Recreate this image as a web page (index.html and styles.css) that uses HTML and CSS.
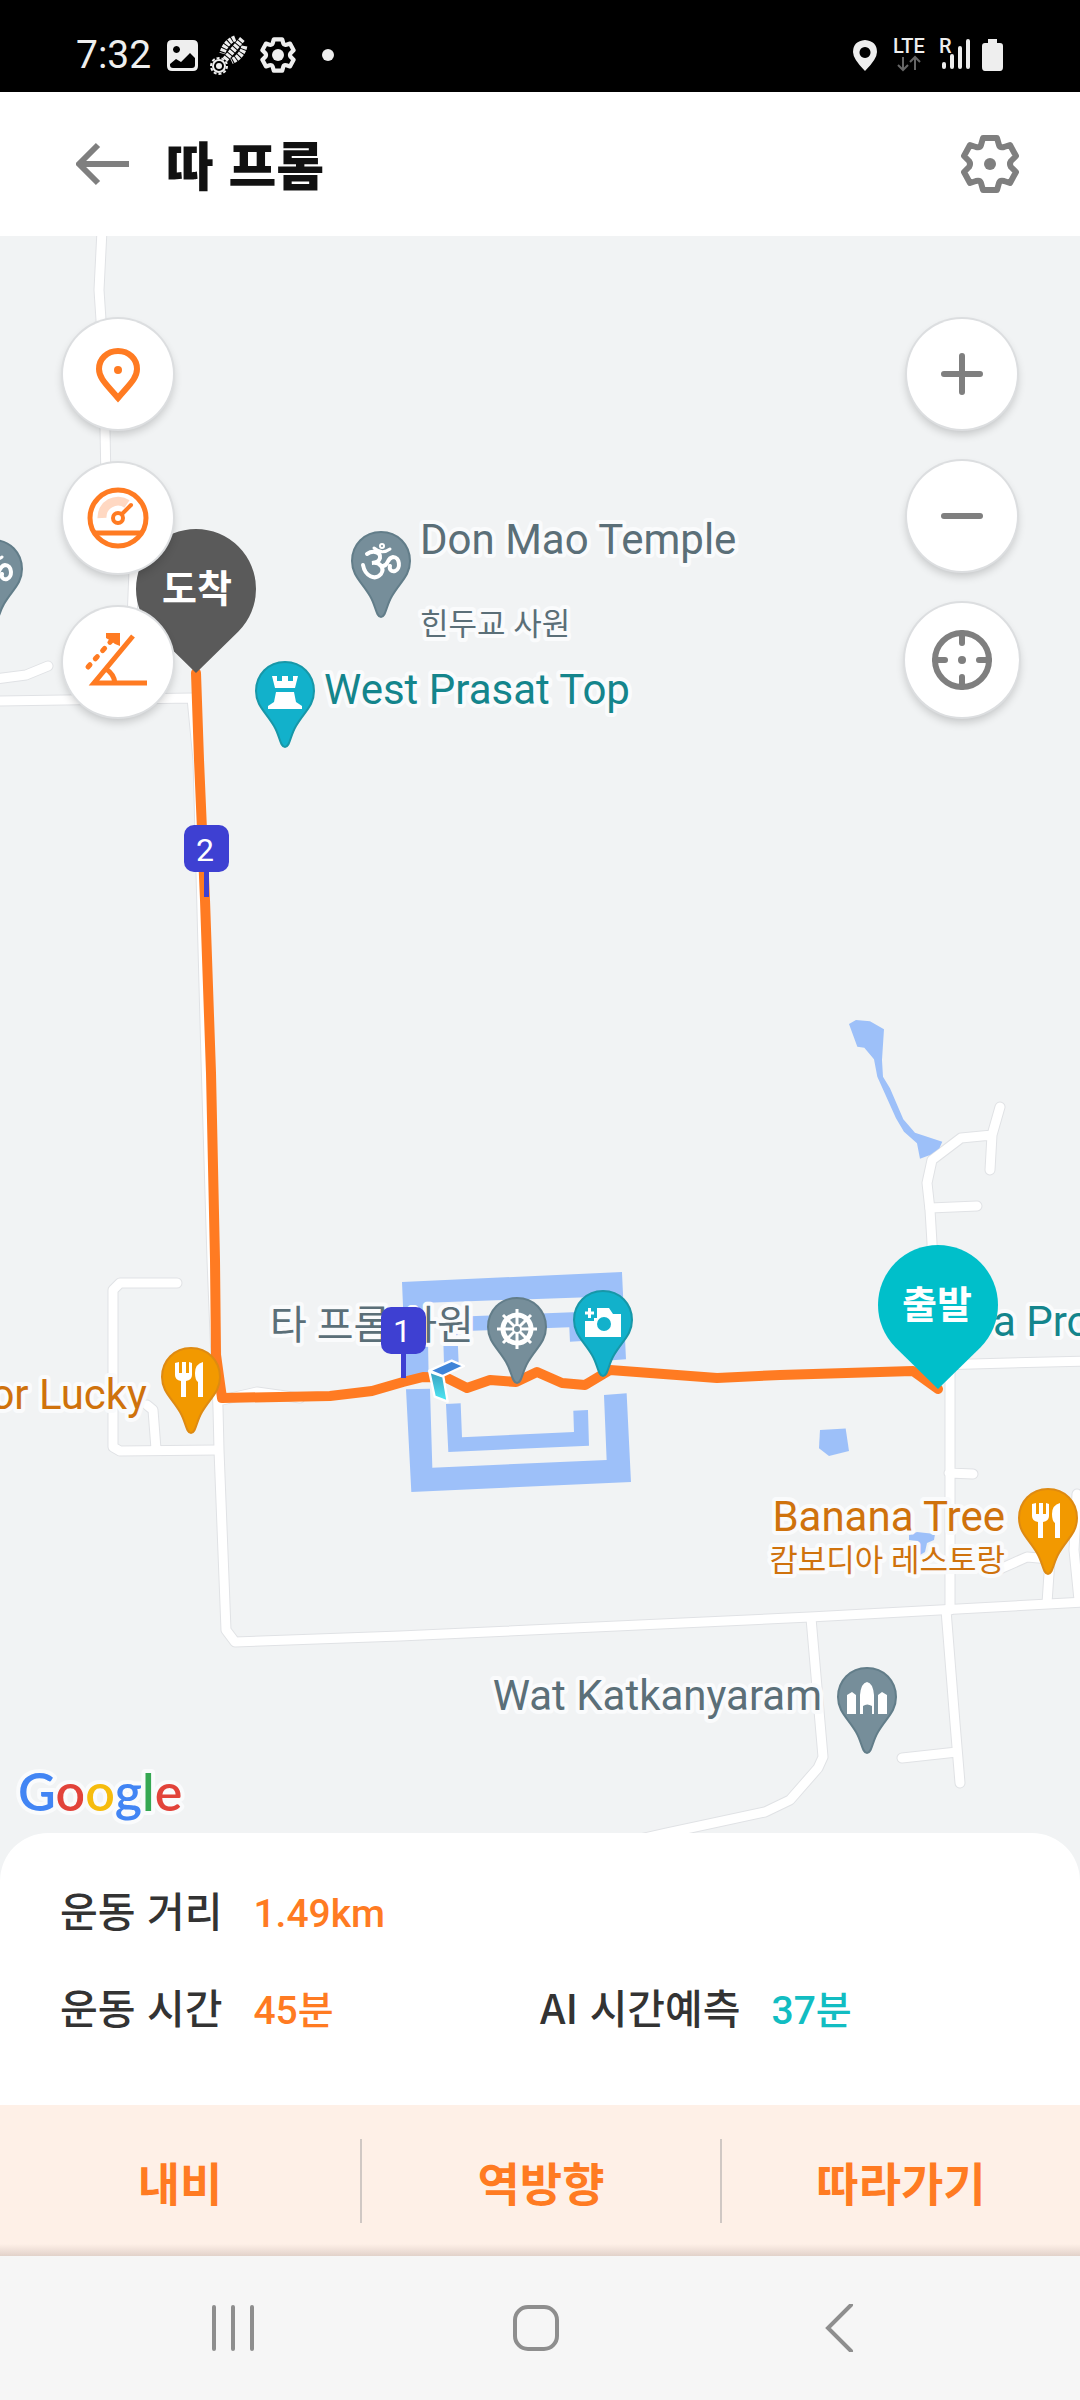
FILE: index.html
```html
<!DOCTYPE html>
<html lang="ko">
	<head>
		<meta charset="utf-8" />
		<meta name="viewport" content="width=device-width, initial-scale=1" />
		<title>따 프롬</title>
		<link rel="stylesheet" href="styles.css">
	</head>
	<body>
		<svg class="defs" aria-hidden="true">
			<defs>
				<symbol id="gear" viewBox="-30 -30 60 60">
					<path d="M-7 -26H7L9 -19Q10 -16 14 -17L20 -19L26 -8L21 -3Q19 0 21 3L26 8L20 19L14 17Q10 16 9 19L7 26H-7L-9 19Q-10 16 -14 17L-20 19L-26 8L-21 3Q-19 0 -21 -3L-26 -8L-20 -19L-14 -17Q-10 -16 -9 -19Z" fill="none" stroke="currentColor" stroke-linejoin="round"/>
				</symbol>
			</defs>
		</svg>

		<!-- status bar -->
		<div class="status">
			<div class="status-side">
				<span class="clock">7:32</span>
				<svg width="31" height="31" viewBox="0 0 31 31"><path fill="#eee" fill-rule="evenodd" d="M5 0H26Q31 0 31 5V26Q31 31 26 31H5Q0 31 0 26V5Q0 0 5 0ZM3 24L9 19L14 22L23 13L28 18V25Q28 28 25 28H6Q3 28 3 25ZM9.500 6A3.500 3.500 0 1 0 9.510 6Z"/></svg>
				<svg width="38" height="38" viewBox="0 0 38 38">
					<g transform="rotate(40 24 13)" fill="none" stroke="#eee">
						<path d="M18 4Q13 13 18 24" stroke-width="6" stroke-dasharray="3 1"/>
						<path d="M30 4Q35 13 30 24" stroke-width="6" stroke-dasharray="3 1"/>
						<path d="M24 0V27" stroke-width="6" stroke-dasharray="3 1"/>
					</g>
					<circle cx="9" cy="30" r="6" fill="none" stroke="#eee" stroke-width="2"/>
					<circle cx="9" cy="30" r="8" fill="none" stroke="#eee" stroke-width="2" stroke-dasharray="3 2"/>
					<circle cx="9" cy="30" r="3" fill="#eee"/>
				</svg>
				<svg class="status-gear" width="36" height="36" viewBox="0 0 36 36"><use href="#gear" width="36" height="36"/><circle cx="18" cy="18" r="6" fill="#eee"/></svg>
				<span class="dot"></span>
			</div>
			<div class="status-side">
				<svg class="gps" width="24" height="31" viewBox="0 0 24 31"><path fill="#eee" fill-rule="evenodd" d="M12 0Q24 1 24 12Q24 19 12 31Q0 19 0 12Q0 1 12 0ZM12 7A5.500 5.500 0 1 0 12.010 7Z"/></svg>
				<svg width="34" height="34" viewBox="0 0 34 34">
					<text class="net" x="0" y="15">LTE</text>
					<path d="M10 19V32M5 27L10 32L15 27M22 32V19M17 24L22 19L27 24" fill="none" stroke="#666" stroke-width="2"/>
				</svg>
				<svg width="31" height="34" viewBox="0 0 31 34">
					<text class="net" x="0" y="15">R</text>
					<path d="M5 26V29M13 18V29M21 10V29M29 3V29" stroke="#eee" stroke-width="4" stroke-linecap="round"/>
				</svg>
				<svg width="21" height="32" viewBox="0 0 21 32"><path fill="#eee" d="M6 0H15V4H18Q21 4 21 7V28Q21 32 18 32H3Q0 32 0 28V7Q0 4 3 4H6Z"/></svg>
			</div>
		</div>

		<header class="header">
			<button class="icon-btn" aria-label="뒤로">
				<svg width="54" height="46" viewBox="0 0 54 46"><path d="M53 23H5M22 4L3 23L22 42" fill="none" stroke="#7f7f7f" stroke-width="6" stroke-linejoin="round"/></svg>
			</button>
			<h1>따 프롬</h1>
			<button class="icon-btn settings" aria-label="설정">
				<svg width="60" height="60" viewBox="0 0 60 60"><use href="#gear" width="60" height="60"/><circle cx="30" cy="30" r="6" fill="#7f7f7f"/></svg>
			</button>
		</header>

		<main class="map">
			<svg class="canvas" viewBox="0 236 1080 1645" preserveAspectRatio="xMidYMin slice">
				<defs>
					<path id="pin" d="M0 1C17 1 29 14 29 30C29 45 19 51 11 65C5 75 5 86 0 86C-5 86 -5 75 -11 65C-19 51 -29 45 -29 30C-29 14 -17 1 0 1Z" stroke-width="2"/>
					<g id="om" fill="none" stroke="#fff" stroke-width="4" stroke-linecap="round">
						<path d="M-14 23C-8 19 0 21 -1 27C-2 31 -6 32 -9 32C-1 31 4 37 0 43C-6 50 -16 45 -18 34"/>
						<path d="M1 35C8 36 5 27 12 26C19 26 20 38 14 40C10 41 8 38 9 35"/>
						<path d="M-7 17Q1 24 9 18" stroke-width="3"/>
						<circle cx="1" cy="15" r="1"/>
					</g>
					<g id="food" fill="#fff">
						<path d="M-16 16V28Q-16 33 -10 34V50H-5V34Q1 33 1 28V16L-2 15V26H-5V15H-9V26H-12V15Z"/>
						<path d="M12 15Q4 17 4 26Q4 33 7 35V50H12Z"/>
					</g>
					<g id="roads" fill="none" stroke-linecap="round" stroke-linejoin="round">
						<path d="M102 230L99 290L101 320L105 430L106 480L134 570L132 620V698"/>
						<path d="M-5 679L26 675L48 666M-5 701L192 698L198 760L206 1060L212 1260L218 1408L219 1450L226 1630L235 1642L400 1636L810 1617L1085 1602"/>
						<path d="M177 1283H120L113 1290V1447L120 1451L217 1450M147 1405L153 1410L156 1449"/>
						<path d="M222 1400L257 1392L300 1398"/>
						<path d="M1000 1107L992 1135L990 1170M992 1135L961 1138L932 1160L927 1183L930 1210L932 1243L935 1365L1085 1361"/>
						<path d="M930 1208L977 1206M950 1365V1610M949 1473L973 1474"/>
						<path d="M946 1610L955 1723L960 1783M957 1752L902 1758"/>
						<path d="M811 1618L823 1757L818 1768L790 1800L765 1812L667 1833L600 1848"/>
						<path d="M1047 1603L1050 1559L1027 1557L1000 1569M1079 1600L1074 1550L1077 1494"/>
					</g>
					<linearGradient id="cyan" x1="0" y1="0" x2="0" y2="1"><stop offset="0" stop-color="#3a9fc0"/><stop offset="1" stop-color="#4deaf5"/></linearGradient>
				</defs>

				<use href="#roads" stroke="#e0e2e5" stroke-width="11"/>
				<use href="#roads" stroke="#fff" stroke-width="9"/>

				<!-- water -->
				<g class="water" transform="translate(380 1240) scale(.3333)">
					<path d="M66 126L726 96L738 358L674 362L665 170L142 188L146 412L78 415Z"/>
					<path d="M78 448L150 446L157 683L680 660L672 465L740 460L753 726L94 756Z"/>
					<path d="M188 232L615 215L620 302L570 305L568 262L232 274L236 370L192 372Z"/>
					<path d="M198 492L242 490L246 592L582 576L580 512L624 510L627 617L205 636Z"/>
				</g>
				<g class="water" transform="translate(780 980) scale(.3333)">
					<path d="M207 132L228 120L270 124L312 148L306 240L309 290L330 325L370 418L405 458L487 485L478 505L450 525L420 536L411 490L372 455L348 415L292 290L282 238L253 203L232 200Z"/>
					<path d="M120 1350L197 1346L207 1413L147 1428L117 1405Z"/>
				</g>
				<path class="water" d="M909 1535L917 1532L935 1534L934 1540L927 1543L925 1552L920 1555L917 1553L918 1541L909 1540Z"/>

				<!-- place names -->
				<g class="places">
					<text class="grey" x="420" y="554">Don Mao Temple</text>
					<text class="grey small" x="420" y="635">힌두교 사원</text>
					<text class="teal" x="324" y="704">West Prasat Top</text>
					<text class="grey ko" x="270" y="1339">타 프롬 사원</text>
					<text class="amber end" x="147" y="1409">or Lucky</text>
					<text class="teal" x="993" y="1336">a Pro</text>
					<text class="amber end" x="1005" y="1531">Banana Tree</text>
					<text class="amber small end" x="1005" y="1571">캄보디아 레스토랑</text>
					<text class="grey end" x="822" y="1710">Wat Katkanyaram</text>
				</g>

				<polyline class="route" points="196,673 199,760 205,900 211,1073 215,1260 216,1355 222,1398 330,1396 372,1391 403,1382 423,1377 447,1378 467,1388 490,1380 516,1382 537,1372 562,1383 585,1385 610,1370 717,1378 780,1375 913,1371 938,1389"/>

				<g transform="translate(-7 539)"><use href="#pin" class="pin-grey"/><use href="#om"/></g>
				<g transform="translate(381 531)"><use href="#pin" class="pin-grey"/><use href="#om"/></g>
				<g transform="translate(285 661)">
					<use href="#pin" class="pin-teal"/>
					<path fill="#fff" d="M-13 15H-8V20H-3V15H3V20H8V15H13L10 27H-10ZM-9 31H9L11 41L17 45V48H-17V45L-11 41Z"/>
				</g>
				<g transform="translate(191 1347)"><use href="#pin" class="pin-amber"/><use href="#food"/></g>
				<g transform="translate(1048 1488)"><use href="#pin" class="pin-amber"/><use href="#food"/></g>
				<g transform="translate(517 1297)">
					<use href="#pin" class="pin-grey"/>
					<g fill="none" stroke="#fff">
						<circle cx="0" cy="32" r="14" stroke-width="5"/>
						<path d="M-20 32H20M0 12V52M-14 18L14 46M14 18L-14 46" stroke-width="3"/>
					</g>
					<circle cx="0" cy="32" r="4" fill="#748b97" stroke="#fff" stroke-width="2"/>
				</g>
				<g transform="translate(603 1290)">
					<use href="#pin" class="pin-teal"/>
					<path fill="#fff" d="M-18 31H-9V28H-6V18H6L10 24H18V47H-18Z"/>
					<path d="M-18 23H-9M-13.500 18V28" stroke="#fff" stroke-width="3"/>
					<circle cx="1" cy="34" r="7" fill="#12b1cb"/>
				</g>
				<g transform="translate(867 1667)">
					<use href="#pin" class="pin-grey"/>
					<path fill="#fff" d="M-20 47V28L-15 25L-11 28V47ZM11 47V28L15 25L20 28V47ZM-7 47V28Q-6 16 0 15Q6 16 7 28V47H5V39Q0 36 -4 39V47Z"/>
				</g>

				<!-- current position -->
				<g transform="translate(380 1240) scale(.3333)" stroke="#fff" stroke-width="7" stroke-linejoin="round">
					<path d="M148 395L190 410L203 485L164 470Z" fill="url(#cyan)"/>
					<path d="M148 392L215 362L252 378L188 408Z" fill="#3f84d8"/>
				</g>

				<!-- km flags -->
				<g class="flag">
					<path d="M204 860H209V897H204ZM401 1340H406V1378H401Z"/>
					<rect x="184" y="825" width="45" height="47" rx="10"/>
					<rect x="381" y="1307" width="45" height="47" rx="10"/>
					<text x="205" y="861">2</text>
					<text x="402" y="1342">1</text>
				</g>

				<!-- finish and start -->
				<g class="stop">
					<path d="M196 673L153.600 631.400A60 60 0 1 1 238.400 631.400Z" fill="#5a5a5a"/>
					<text x="197" y="602">도착</text>
					<path d="M938 1389L895.600 1347.400A60 60 0 1 1 980.400 1347.400Z" fill="#00bfca"/>
					<text x="937" y="1318">출발</text>
				</g>

				<text class="google" x="18" y="1811"><tspan fill="#4285f4">G</tspan><tspan fill="#e2433a">o</tspan><tspan fill="#f6bc0d">o</tspan><tspan fill="#4285f4">g</tspan><tspan fill="#36a852">l</tspan><tspan fill="#e2433a">e</tspan></text>
			</svg>

			<div class="tools tools-left">
				<button aria-label="지점">
					<svg viewBox="0 0 110 110"><path d="M55 32C66 32 74 40 74 50C74 59 67 65 55 79C43 65 36 59 36 50C36 40 44 32 55 32Z"/><circle class="solid" cx="55" cy="51" r="4"/></svg>
				</button>
				<button aria-label="속도">
					<svg viewBox="0 0 110 110"><path d="M39 55A16 16 0 0 1 64 41" stroke="#ffd8c2" stroke-width="9"/><g stroke-width="5"><circle cx="55" cy="55" r="28"/><path d="M32 70H78"/></g><g stroke-width="4"><circle cx="55" cy="55" r="5"/><path d="M59 51L68 42" stroke-linecap="round"/></g></svg>
				</button>
				<button aria-label="경사">
					<svg viewBox="0 0 110 110"><g stroke-width="5"><path d="M84 76H31L70 29M43 62Q51 67 52 76"/><path d="M25 60L49 33" stroke-dasharray="3 8" stroke-linecap="round"/></g><path class="solid" d="M43 26H57V39L52 37L48 34L43 31Z"/></svg>
				</button>
			</div>
			<div class="tools tools-right">
				<button aria-label="확대">
					<svg viewBox="0 0 110 110"><path d="M37 55H73M55 37V73" stroke-linecap="round"/></svg>
				</button>
				<button aria-label="축소">
					<svg viewBox="0 0 110 110"><path d="M37 55H73" stroke-linecap="round"/></svg>
				</button>
				<button class="locate" aria-label="현재 위치">
					<svg viewBox="0 0 114 114"><circle cx="57" cy="57" r="27"/><path d="M57 30V40M57 74V84M30 57H40M74 57H84" stroke-linecap="round"/><circle class="solid" cx="57" cy="57" r="4"/></svg>
				</button>
			</div>
		</main>

		<dl class="stats">
			<div class="stat wide"><dt>운동 거리</dt><dd>1.49km</dd></div>
			<div class="stat"><dt>운동 시간</dt><dd>45분</dd></div>
			<div class="stat ai"><dt>AI 시간예측</dt><dd>37분</dd></div>
		</dl>

		<div class="actions">
			<button>내비</button>
			<button>역방향</button>
			<button>따라가기</button>
		</div>

		<nav class="nav">
			<button aria-label="최근 앱"><svg width="48" height="48" viewBox="0 0 48 48"><path d="M5 3V45M24 3V45M43 3V45"/></svg></button>
			<button aria-label="홈"><svg width="48" height="48" viewBox="0 0 48 48"><rect x="3" y="3" width="42" height="42" rx="13"/></svg></button>
			<button aria-label="뒤로"><svg width="48" height="48" viewBox="0 0 48 48"><path d="M36 1L13 24L36 47"/></svg></button>
		</nav>
	</body>
</html>
```

FILE: styles.css
```css
* {
	box-sizing: border-box;
}
body {
	margin: 0;
	min-height: 100vh;
	display: flex;
	flex-direction: column;
	background: #fff;
	color: #333;
	font-family: Roboto, "Noto Sans CJK KR", sans-serif;
}
button {
	padding: 0;
	border: 0;
	background: none;
	color: inherit;
	font-family: inherit;
	cursor: pointer;
}
svg {
	display: block;
}
.defs {
	position: absolute;
	width: 0;
	height: 0;
}

/* status bar */
.status {
	display: flex;
	justify-content: space-between;
	height: 92px;
	padding: 18px 77px 0 76px;
	background: #000;
	color: #eee;
}
.status-side {
	display: flex;
	align-items: center;
	gap: 12px;
}
.status-side svg {
	overflow: visible;
}
.clock {
	margin-right: 4px;
	font-size: 39px;
}
.status-gear {
	stroke-width: 7;
}
.gps {
	margin-right: 4px;
}
.dot {
	width: 12px;
	height: 12px;
	margin-left: 14px;
	border-radius: 50%;
	background: #eee;
}
.net {
	font-size: 20px;
	font-weight: 500;
	fill: #eee;
}

/* header */
.header {
	display: flex;
	align-items: center;
	height: 144px;
	padding: 0 60px 0 76px;
}
.header h1 {
	margin: 0 auto 0 36px;
	color: #111;
	font-family: "Noto Sans CJK KR", sans-serif;
	font-size: 52px;
	font-weight: 900;
	line-height: 72px;
}
.header .settings {
	color: #7f7f7f;
	stroke-width: 6;
}

/* map */
.map {
	position: relative;
	flex: 1;
	min-height: 600px;
	overflow: hidden;
	background: #f1f3f4;
}
.canvas {
	position: absolute;
	width: 100%;
	height: 100%;
}
.water {
	fill: #9dc0f9;
}
.route {
	fill: none;
	stroke: #ff7b22;
	stroke-width: 10;
	stroke-linecap: round;
	stroke-linejoin: round;
}
.places {
	font-size: 42px;
	stroke: #fafbfc;
	stroke-width: 8;
	stroke-linejoin: round;
	paint-order: stroke;
}
.grey { fill: #5b6f78; }
.teal { fill: #14858c; }
.amber { fill: #cf720c; }
.end { text-anchor: end; }
.ko { font-size: 40px; }
.small { font-size: 31px; }
.pin-grey {
	fill: #768e9a;
	stroke: #627d89;
}
.pin-teal {
	fill: #12b1cb;
	stroke: #1797a8;
}
.pin-amber {
	fill: #f29900;
	stroke: #de8a12;
}
.flag {
	fill: #3e40d2;
}
.flag text {
	fill: #fff;
	font-size: 32px;
	text-anchor: middle;
}
.stop text {
	fill: #fff;
	font-family: "Noto Sans CJK KR", sans-serif;
	font-size: 38px;
	font-weight: 700;
	text-anchor: middle;
}
.google {
	font-family: Lato, sans-serif;
	font-size: 52px;
	font-weight: 600;
	stroke: #fafbfc;
	stroke-width: 8;
	stroke-linejoin: round;
	paint-order: stroke;
}

/* round buttons over the map */
.tools {
	position: absolute;
	top: 83px;
	display: flex;
	flex-direction: column;
	align-items: center;
}
.tools button {
	width: 110px;
	height: 110px;
	border-radius: 50%;
	background: #fff;
	box-shadow: 0 0 0 2px #dcdee0, 0 5px 10px rgba(0, 0, 0, .2);
}
.tools svg {
	fill: none;
	stroke: currentColor;
	stroke-width: 6;
}
.tools .solid {
	fill: currentColor;
	stroke: none;
}
.tools-left {
	left: 63px;
	gap: 34px;
	color: #ff7b22;
}
.tools-right {
	right: 61px;
	gap: 32px;
	color: #7f7f7f;
}
.tools .locate {
	width: 114px;
	height: 114px;
}

/* workout figures */
.stats {
	position: relative;
	display: grid;
	grid-template-columns: 1fr 1fr;
	row-gap: 37px;
	margin: -48px 0 0;
	padding: 46px 0 69px;
	border-radius: 48px 48px 0 0;
	background: #fff;
	font-family: "Noto Sans CJK KR", sans-serif;
	font-size: 41px;
	font-weight: 500;
	line-height: 60px;
}
.stat {
	display: flex;
	align-items: baseline;
	gap: 31px;
	height: 60px;
	padding-left: 60px;
}
.wide {
	grid-column: 1 / 3;
}
.stat dd {
	margin: 0;
	color: #ff7b22;
	font-family: Roboto, "Noto Sans CJK KR", sans-serif;
	font-size: 39px;
}
.stat.ai {
	padding-left: 0;
}
.ai dd {
	color: #12bdc2;
}

/* actions */
.actions {
	display: grid;
	grid-template-columns: repeat(3, 1fr);
	padding: 34px 0 33px;
	background: linear-gradient(to top, #e2d2ca, #fef0e7 12px);
}
.actions button {
	height: 84px;
	color: #ff7b22;
	font-family: "Noto Sans CJK KR", sans-serif;
	font-size: 46px;
	font-weight: 700;
}
.actions button + button {
	border-left: 2px solid #d0c8c4;
}

/* system navigation */
.nav {
	display: grid;
	grid-template-columns: repeat(3, 1fr);
	height: 144px;
	padding: 0 90px 0 82px;
	background: #f6f6f6;
}
.nav svg {
	margin: 0 auto;
	fill: none;
	stroke: #8e8e8e;
	stroke-width: 4;
	stroke-linecap: round;
}
```
